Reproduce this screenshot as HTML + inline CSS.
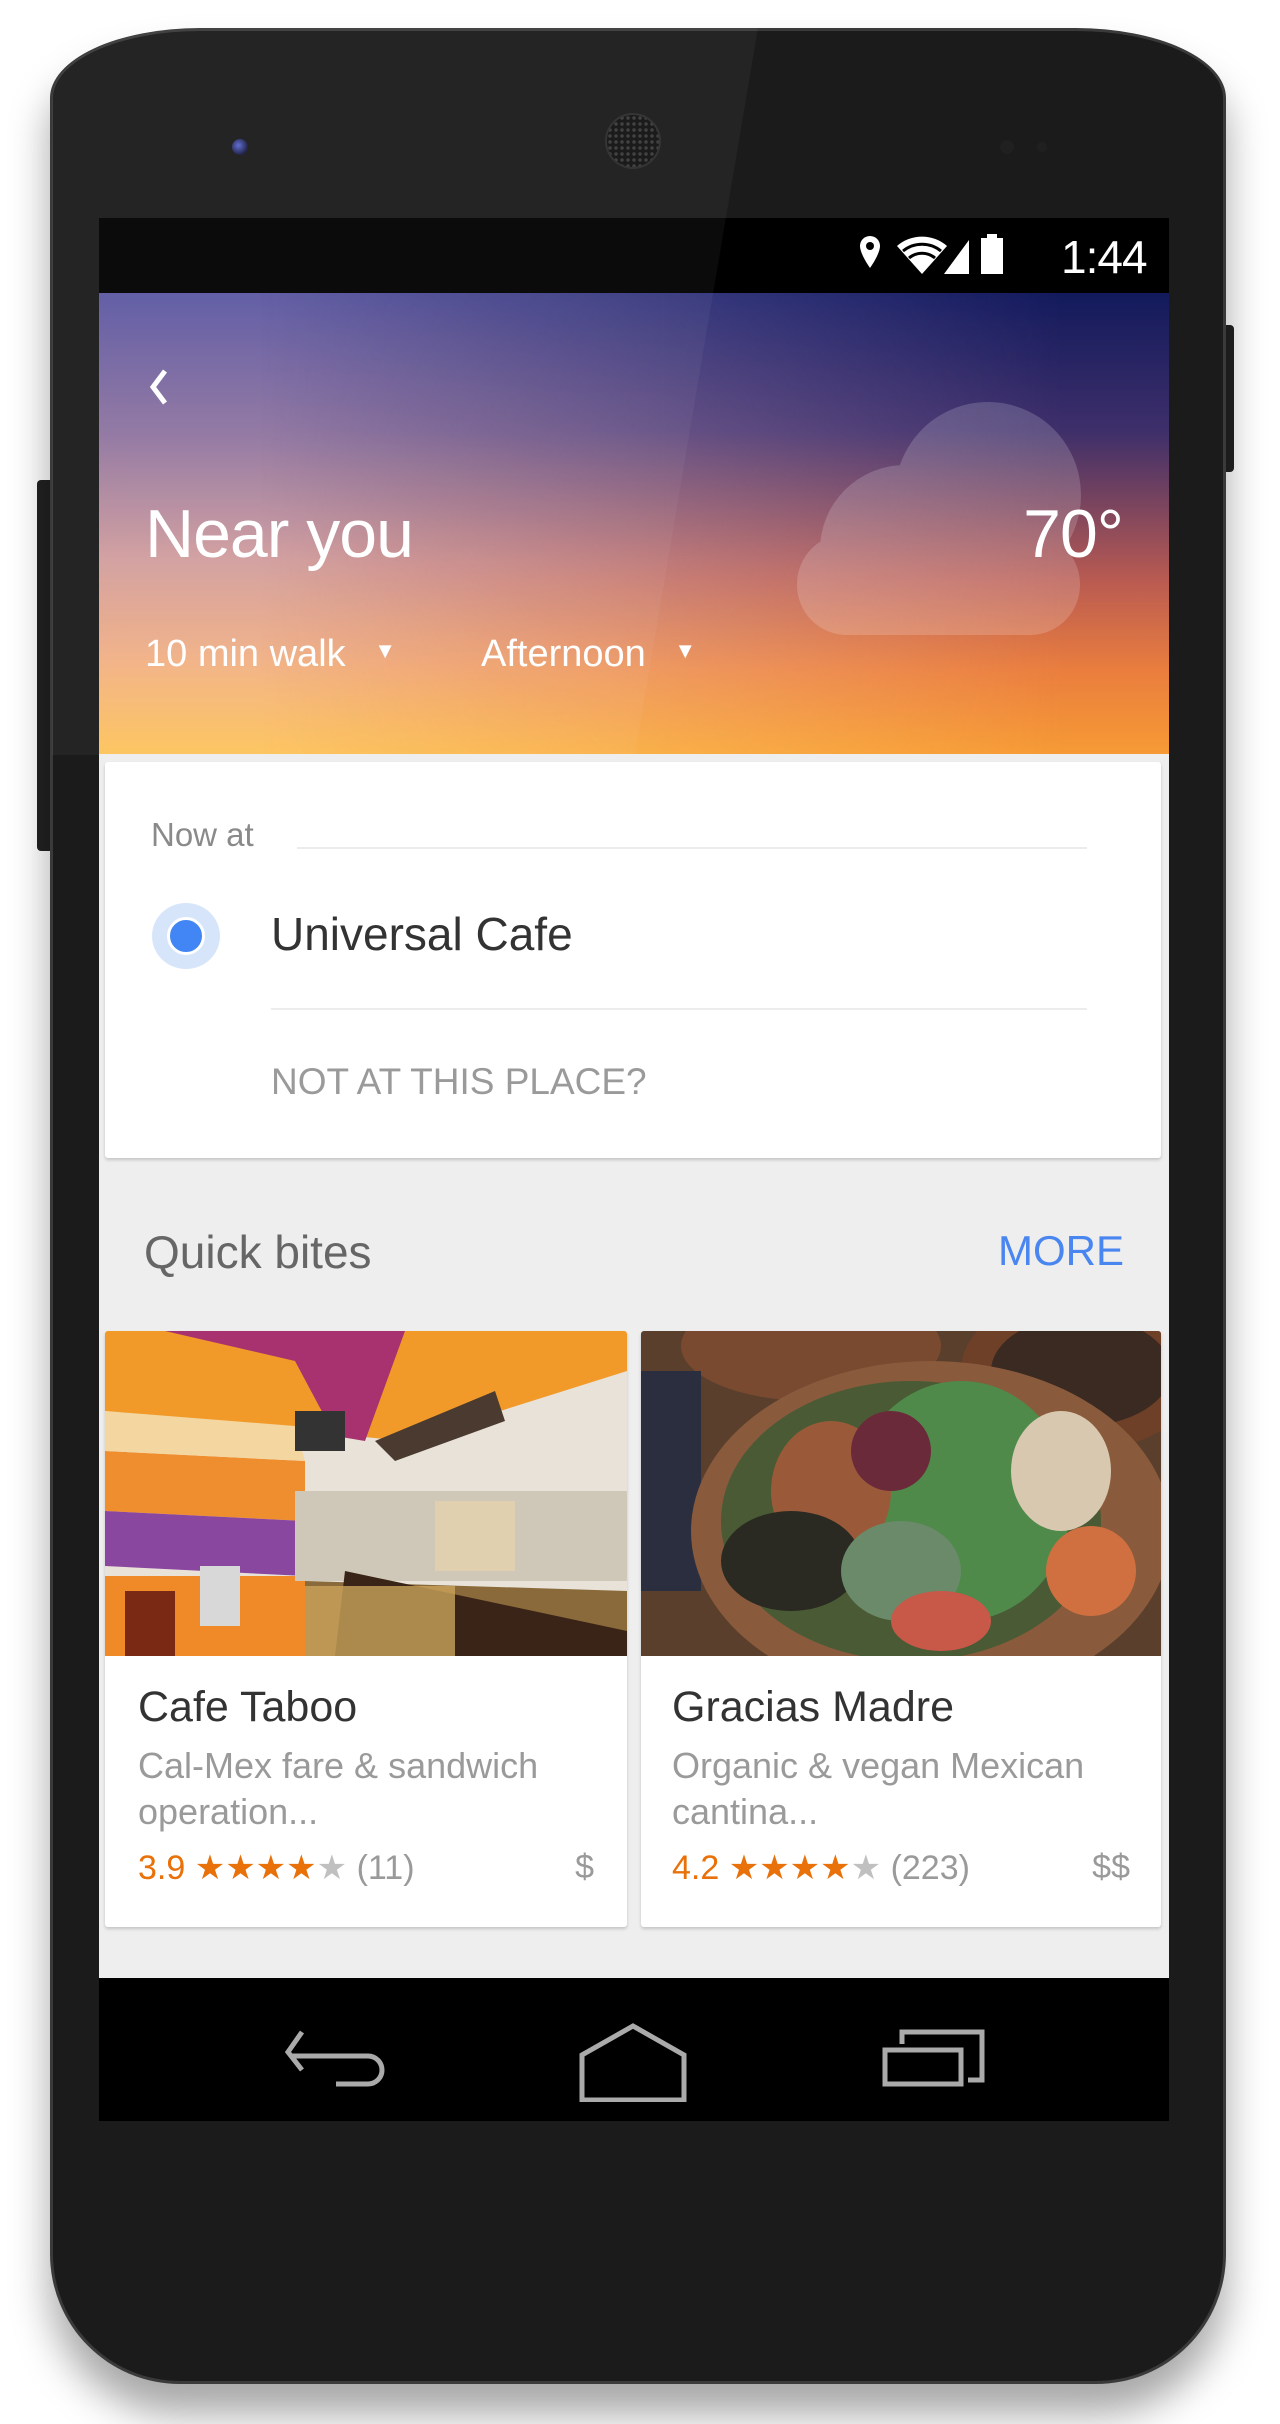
<!DOCTYPE html>
<html><head><meta charset="utf-8"><style>
*{margin:0;padding:0;box-sizing:border-box}
html,body{width:1280px;height:2424px;background:#fff;overflow:hidden;font-family:"Liberation Sans",sans-serif}
.abs{position:absolute}
.phone{position:absolute;left:50px;top:28px;width:1176px;height:2356px;background:#1b1b1b;border-radius:150px 150px 130px 130px / 70px 70px 130px 130px;border:3px solid #3a3a3a;box-shadow:0 30px 40px rgba(0,0,0,.35);overflow:hidden}
.sheen{position:absolute;left:52px;top:28px;width:1200px;height:727px;background:rgba(255,255,255,.045);clip-path:polygon(0 0,706px 0,583px 727px,0 727px);border-top-left-radius:150px 70px;z-index:5;pointer-events:none}
.screen{position:absolute;left:99px;top:218px;width:1070px;height:1903px;background:#eeeeee;overflow:hidden}
.status{position:absolute;left:0;top:0;width:1070px;height:75px;background:#000}
.header{position:absolute;left:0;top:75px;width:1070px;height:461px;background:linear-gradient(to bottom,#5c58a2 0%,#8e74a0 30%,#d29e9e 58%,#f2b184 80%,#fdc45c 100%)}
.header .ov{position:absolute;inset:0;background:linear-gradient(to bottom,#121a5c 0%,#3e2f6a 30%,#b85a52 62%,#ea7e3e 82%,#f69a35 100%);-webkit-mask-image:linear-gradient(to right,rgba(0,0,0,0) 15%,rgba(0,0,0,1) 90%)}
.w{color:#fff;position:absolute;white-space:nowrap}
.card{position:absolute;background:#fff;border-radius:3px;box-shadow:0 2px 3px rgba(0,0,0,.18)}
.t{position:absolute;white-space:nowrap}
.cl{position:absolute;background:#fff}
</style></head><body>
<div class="abs" style="left:1222px;top:325px;width:12px;height:147px;background:#222;border-radius:0 4px 4px 0"></div>
<div class="abs" style="left:37px;top:480px;width:14px;height:371px;background:#222;border-radius:4px 0 0 4px"></div>
<div class="phone"></div>
<div class="abs" style="left:232px;top:139px;width:16px;height:16px;border-radius:50%;background:radial-gradient(circle at 40% 40%,#5a6ad0,#1a1a40 70%)"></div>
<div class="abs" style="left:605px;top:113px;width:56px;height:56px;border-radius:50%;background:radial-gradient(#3a3a3a 1.5px,#111 2px) 0 0/6px 6px;border:2px solid #2c2c2c"></div>
<div class="abs" style="left:1000px;top:140px;width:14px;height:14px;border-radius:50%;background:#202020"></div>
<div class="abs" style="left:1037px;top:142px;width:10px;height:10px;border-radius:50%;background:#202020"></div>

<div class="screen">
 <div class="status">
  <svg class="abs" style="left:758px;top:14px" width="240" height="50" viewBox="0 0 240 50">
   <path d="M13 4a10 10 0 0 1 10 10c0 8-10 22-10 22S3 22 3 14A10 10 0 0 1 13 4z" fill="#fff"/><circle cx="13" cy="14" r="4" fill="#000"/>
   <path d="M40 14a38 38 0 0 1 50 0L65 42z" fill="#fff"/>
   <path d="M46 19a30 30 0 0 1 38 0" stroke="#000" stroke-width="3" fill="none"/><path d="M52 26a20 20 0 0 1 26 0" stroke="#000" stroke-width="3" fill="none"/>
   <path d="M87 42L112 8V42z" fill="#fff"/>
   <rect x="124" y="6" width="22" height="36" fill="#fff"/><rect x="130" y="2" width="10" height="5" fill="#fff"/>
  </svg>
  <div class="w" style="left:962px;top:12px;font-size:46px;letter-spacing:-1px">1:44</div>
 </div>
 <div class="header"><div class="ov"></div>
  <svg class="abs" style="left:48px;top:74px" width="24" height="40" viewBox="0 0 24 40"><path d="M18 4L6 20l12 16" stroke="#fff" stroke-width="5" fill="none"/></svg>
  <div class="abs" style="left:0;top:0;width:1070px;height:461px;opacity:.17">
   <div class="cl" style="left:796px;top:109px;width:186px;height:186px;border-radius:50%"></div>
   <div class="cl" style="left:698px;top:241px;width:283px;height:101px;border-radius:50px"></div>
   <div class="cl" style="left:721px;top:172px;width:170px;height:170px;border-radius:50%"></div>
   <div class="cl" style="left:861px;top:195px;width:108px;height:108px;border-radius:50%"></div>
  </div>
  <div class="w" style="left:46px;top:202px;font-size:68px;letter-spacing:-1px">Near you</div>
  <div class="w" style="right:46px;top:202px;font-size:68px;letter-spacing:-1px">70°</div>
  <div class="w" style="left:46px;top:340px;font-size:38px">10 min walk <span style="font-size:22px;margin-left:18px;vertical-align:8px">▼</span></div>
  <div class="w" style="left:382px;top:340px;font-size:38px">Afternoon <span style="font-size:22px;margin-left:18px;vertical-align:8px">▼</span></div>
 </div>

 <div class="card" style="left:6px;top:544px;width:1056px;height:396px">
  <div class="t" style="left:46px;top:54px;font-size:33px;color:#8a8a8a">Now at</div>
  <div class="abs" style="left:192px;top:85px;width:790px;height:2px;background:#ececec"></div>
  <div class="abs" style="left:47px;top:141px;width:68px;height:66px;border-radius:50%;background:#d7e5fb"></div>
  <div class="abs" style="left:65px;top:158px;width:32px;height:32px;border-radius:50%;background:#4285f4;border:3px solid #fff;box-sizing:content-box;margin:-3px"></div>
  <div class="t" style="left:166px;top:145px;font-size:46px;color:#333">Universal Cafe</div>
  <div class="abs" style="left:166px;top:246px;width:816px;height:2px;background:#ececec"></div>
  <div class="t" style="left:166px;top:299px;font-size:37px;color:#9a9a9a">NOT AT THIS PLACE?</div>
 </div>

 <div class="t" style="left:45px;top:1007px;font-size:46px;color:#666">Quick bites</div>
 <div class="t" style="right:45px;top:1009px;font-size:42px;color:#4a86f0">MORE</div>

 <div class="card" style="left:6px;top:1113px;width:522px;height:596px;overflow:hidden">
  <svg width="522" height="325" viewBox="0 0 522 325" class="abs" style="left:0;top:0">
   <rect width="522" height="325" fill="#e8e2d8"/>
   <polygon points="0,0 522,0 522,40 300,110 0,80" fill="#f19a2a"/>
   <polygon points="60,0 300,0 260,110 230,105 190,30" fill="#a8326f"/>
   <polygon points="0,120 200,130 200,190 0,180" fill="#ee8e2e"/>
   <polygon points="0,180 200,190 200,245 0,235" fill="#8a47a0"/>
   <polygon points="0,245 200,245 200,325 0,325" fill="#f08a28"/>
   <polygon points="0,80 190,95 200,130 0,120" fill="#f4d6a0"/>
   <rect x="20" y="260" width="50" height="65" fill="#7a2a14"/>
   <rect x="95" y="235" width="40" height="60" fill="#d8d8d8"/>
   <rect x="190" y="160" width="332" height="90" fill="#cfc8b8"/>
   <rect x="190" y="80" width="50" height="40" fill="#333"/>
   <polygon points="270,110 390,60 400,90 290,130" fill="#4a3a30"/>
   <polygon points="200,250 522,260 522,325 200,325" fill="#8a6a3a"/>
   <polygon points="240,240 522,300 522,325 230,325" fill="#3a2418"/>
   <rect x="200" y="255" width="150" height="70" fill="#c9a25a" opacity=".8"/>
   <rect x="330" y="170" width="80" height="70" fill="#e0d0b0"/>
  </svg>
  <div class="t" style="left:33px;top:352px;font-size:43px;color:#333">Cafe Taboo</div>
  <div class="t" style="left:33px;top:412px;font-size:36px;color:#9a9a9a;line-height:46px">Cal-Mex fare &amp; sandwich<br>operation...</div>
  <div class="t" style="left:33px;top:517px;font-size:34px;color:#9a9a9a"><span style="color:#e8710a">3.9 ★★★★</span><span style="color:#c0c0c0">★</span> (11)</div>
  <div class="t" style="right:33px;top:517px;font-size:34px;color:#9a9a9a">$</div>
 </div>

 <div class="card" style="left:542px;top:1113px;width:520px;height:596px;overflow:hidden">
  <svg width="520" height="325" viewBox="0 0 520 325" class="abs" style="left:0;top:0">
   <rect width="520" height="325" fill="#5a3f2c"/>
   <ellipse cx="170" cy="15" rx="130" ry="55" fill="#7a4a30"/>
   <ellipse cx="440" cy="40" rx="120" ry="80" fill="#6e4028"/>
   <ellipse cx="440" cy="40" rx="90" ry="55" fill="#3a2a22"/>
   <rect x="0" y="40" width="60" height="220" fill="#2a2e3e"/>
   <ellipse cx="290" cy="200" rx="240" ry="170" fill="#8a5a3c"/>
   <ellipse cx="270" cy="190" rx="190" ry="140" fill="#4a5a34"/>
   <ellipse cx="320" cy="170" rx="110" ry="120" fill="#4f8a4a"/>
   <ellipse cx="190" cy="160" rx="60" ry="70" fill="#9a5a3a"/>
   <ellipse cx="150" cy="230" rx="70" ry="50" fill="#2a2a22"/>
   <ellipse cx="260" cy="240" rx="60" ry="50" fill="#6a8a6a"/>
   <ellipse cx="420" cy="140" rx="50" ry="60" fill="#d8c8b0"/>
   <ellipse cx="450" cy="240" rx="45" ry="45" fill="#d07040"/>
   <ellipse cx="300" cy="290" rx="50" ry="30" fill="#c85848"/>
   <ellipse cx="250" cy="120" rx="40" ry="40" fill="#6a2a3a"/>
  </svg>
  <div class="t" style="left:31px;top:352px;font-size:43px;color:#333">Gracias Madre</div>
  <div class="t" style="left:31px;top:412px;font-size:36px;color:#9a9a9a;line-height:46px">Organic &amp; vegan Mexican<br>cantina...</div>
  <div class="t" style="left:31px;top:517px;font-size:34px;color:#9a9a9a"><span style="color:#e8710a">4.2 ★★★★</span><span style="color:#c0c0c0">★</span> (223)</div>
  <div class="t" style="right:31px;top:517px;font-size:34px;color:#9a9a9a">$$</div>
 </div>

 <div class="abs" style="left:0;top:1760px;width:1070px;height:143px;background:#000">
  <svg class="abs" style="left:185px;top:50px" width="105" height="80" viewBox="0 0 105 80">
   <path d="M18 4L4 24l14 18" stroke="#aaa" stroke-width="5" fill="none"/><path d="M6 24h78a14 14 0 0 1 0 28H52" stroke="#aaa" stroke-width="5" fill="none" transform="translate(0,4)"/>
  </svg>
  <svg class="abs" style="left:479px;top:44px" width="110" height="80" viewBox="0 0 110 80">
   <path d="M4 78V33L55 4l51 29v45z" stroke="#aaa" stroke-width="5" fill="none"/>
  </svg>
  <svg class="abs" style="left:783px;top:50px" width="105" height="80" viewBox="0 0 105 80">
   <rect x="3" y="22" width="76" height="34" stroke="#aaa" stroke-width="5" fill="none"/><path d="M20 16V4h80v48H86" stroke="#aaa" stroke-width="5" fill="none"/>
  </svg>
 </div>
</div>
<div class="sheen"></div>
</body></html>
